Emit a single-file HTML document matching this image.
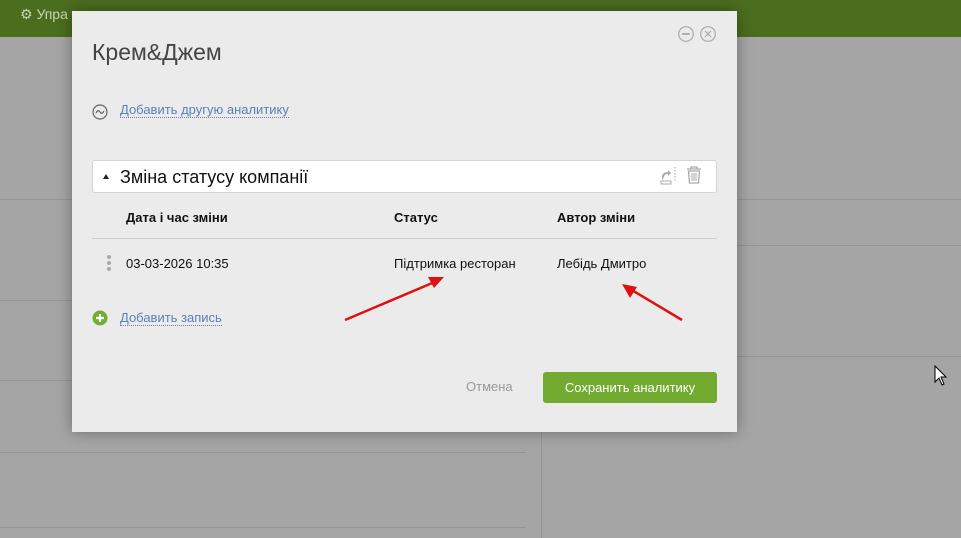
<!DOCTYPE html>
<html><head><meta charset="utf-8"><style>
*{margin:0;padding:0;box-sizing:border-box}
body{width:961px;height:538px;overflow:hidden;background:#a5a5a5;font-family:"Liberation Sans","DejaVu Sans",sans-serif;position:relative}
.top{position:absolute;left:0;top:0;width:961px;height:37px;background:#4b6d1e}
.hl{position:absolute;height:1px;background:#959595}
.vl{position:absolute;width:1px;background:#959595}
.modal{position:absolute;left:72px;top:11px;width:665px;height:421px;background:#ebebeb;box-shadow:0 0 14px rgba(0,0,0,.35)}
.abs{position:absolute}
.link{color:#5b7fb8;font-size:13px;border-bottom:1px dotted #5b7fb8;line-height:15px}
.th{font-weight:bold;font-size:13px;color:#111}
.td{font-size:13px;color:#111}
</style></head><body>
<div class="top"></div>
<div class="abs" style="left:20px;top:6px;color:#c8d6b4;font-size:14px">&#9881; Упра</div>
<div class="hl" style="left:0;top:199px;width:541px"></div>
<div class="hl" style="left:0;top:300px;width:526px"></div>
<div class="hl" style="left:0;top:380px;width:526px"></div>
<div class="hl" style="left:0;top:452px;width:526px"></div>
<div class="hl" style="left:0;top:527px;width:526px"></div>
<div class="vl" style="left:541px;top:199px;height:339px"></div>
<div class="hl" style="left:541px;top:199px;width:420px"></div>
<div class="hl" style="left:541px;top:245px;width:420px"></div>
<div class="hl" style="left:541px;top:356px;width:420px"></div>
<svg class="abs" style="left:934px;top:365px" width="14" height="22" viewBox="0 0 14 22"><path d="M1 1 L1 17 L5 13 L8 20 L10 19 L7 12 L12 12 Z" fill="#fff" stroke="#000" stroke-width="1"/></svg>

<div class="modal">
 <div class="abs" style="left:20px;top:28px;font-size:23px;color:#444">Крем&amp;Джем</div>
 <svg class="abs" style="left:605px;top:14px" width="40" height="18" viewBox="0 0 40 18">
  <circle cx="9" cy="9" r="7.3" fill="none" stroke="#aaa" stroke-width="1.2"/><line x1="5" y1="9" x2="13" y2="9" stroke="#aaa" stroke-width="1.8"/>
  <circle cx="31" cy="9" r="7.3" fill="none" stroke="#aaa" stroke-width="1.2"/><path d="M28 6 L34 12 M34 6 L28 12" stroke="#aaa" stroke-width="1.2"/>
 </svg>
 <svg class="abs" style="left:20px;top:93px" width="16" height="16" viewBox="0 0 16 16"><circle cx="8" cy="8" r="7" fill="none" stroke="#666" stroke-width="1.2"/><path d="M4 9 Q6 5 8 8 T12 7" fill="none" stroke="#666" stroke-width="1.2"/></svg>
 <div class="abs link" style="left:48px;top:91px">Добавить другую аналитику</div>

 <div class="abs" style="left:20px;top:149px;width:625px;height:33px;background:#fff;border:1px solid #d4d4d4;border-radius:3px">
  <div class="abs" style="left:10px;top:13px;width:0;height:0;border-left:3px solid transparent;border-right:3px solid transparent;border-bottom:5px solid #222"></div>
  <div class="abs" style="left:27px;top:6px;font-size:18px;color:#111">Зміна статусу компанії</div>
  <svg class="abs" style="left:567px;top:5px" width="20" height="20" viewBox="0 0 20 20"><path d="M2 14 L2 10 Q3 6 8 6 L8 4 L11 7 L8 10 L8 8 Q4 8 4 11" fill="#aaa"/><rect x="1" y="15" width="10" height="3" fill="none" stroke="#aaa"/><path d="M15 1v14" stroke="#aaa" stroke-dasharray="1.5 1.5"/></svg>
  <svg class="abs" style="left:592px;top:4px" width="18" height="20" viewBox="0 0 18 20"><path d="M2 4h14M6 4V2h6v2" fill="none" stroke="#aaa" stroke-width="1.3"/><path d="M3.5 6h11l-1 12h-9z" fill="none" stroke="#aaa" stroke-width="1.3"/><path d="M7 8v8M9 8v8M11 8v8" stroke="#aaa"/></svg>
 </div>

 <div class="abs th" style="left:54px;top:199px">Дата і час зміни</div>
 <div class="abs th" style="left:322px;top:199px">Статус</div>
 <div class="abs th" style="left:485px;top:199px">Автор зміни</div>
 <div class="abs" style="left:20px;top:227px;width:625px;height:1px;background:#cfcfcf"></div>
 <div class="abs" style="left:35px;top:244px;width:4px;height:4px;border-radius:2px;background:#aaa;box-shadow:0 6px 0 #aaa,0 12px 0 #aaa"></div>
 <div class="abs td" style="left:54px;top:245px">03-03-2026 10:35</div>
 <div class="abs td" style="left:322px;top:245px">Підтримка ресторан</div>
 <div class="abs td" style="left:485px;top:245px">Лебідь Дмитро</div>

 <svg class="abs" style="left:0;top:0" width="665" height="421" viewBox="0 0 665 421">
  <line x1="273" y1="309" x2="365" y2="270" stroke="#e01010" stroke-width="2.5"/><path d="M372 266 L356 266 L362 277 Z" fill="#e01010"/>
  <line x1="610" y1="309" x2="558" y2="278" stroke="#e01010" stroke-width="2.5"/><path d="M550 273 L558 287 L565 276 Z" fill="#e01010"/>
 </svg>

 <svg class="abs" style="left:20px;top:299px" width="16" height="16" viewBox="0 0 16 16"><circle cx="8" cy="8" r="7.5" fill="#72ae30"/><path d="M8 4v8M4 8h8" stroke="#fff" stroke-width="2.2"/></svg>
 <div class="abs link" style="left:48px;top:299px">Добавить запись</div>

 <div class="abs" style="left:394px;top:368px;font-size:13px;color:#999">Отмена</div>
 <div class="abs" style="left:471px;top:361px;width:174px;height:31px;background:#72ab2f;border-radius:3px;color:#fff;font-size:13px;text-align:center;line-height:31px">Сохранить аналитику</div>
</div>
</body></html>
